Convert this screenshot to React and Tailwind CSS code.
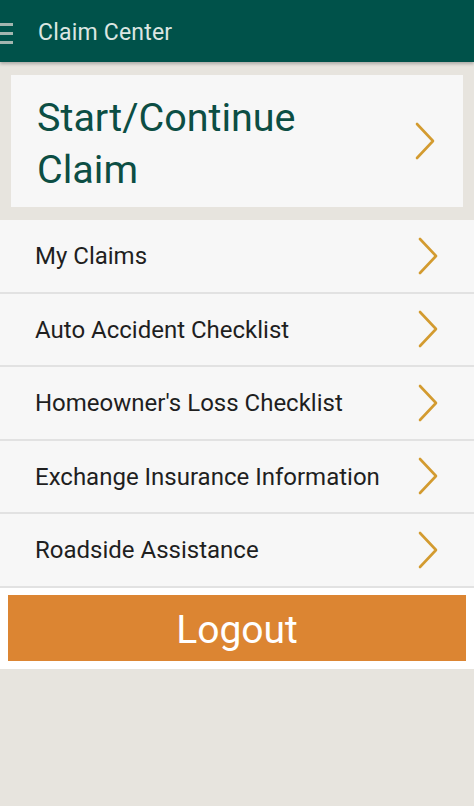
const items = [
  "My Claims",
  "Auto Accident Checklist",
  "Homeowner's Loss Checklist",
  "Exchange Insurance Information",
  "Roadside Assistance",
];

const Chevron = ({ className }) => (
  <svg viewBox="0 0 20 38" className={className} fill="none">
    <path d="M2 2 L18 19 L2 36" stroke="#d39b30" strokeWidth="2.6" strokeLinecap="round" strokeLinejoin="round" />
  </svg>
);

export default function App() {
  return (
    <div className="w-[474px] h-[806px] bg-[#e7e4de] flex flex-col font-['Roboto',sans-serif]">
      <header className="h-[62px] bg-[#00524a] flex items-center pt-[5px] shadow-[0_2px_3px_rgba(0,0,0,0.25)] relative z-10">
        <div className="w-[13px] flex flex-col gap-[6px] mr-[25px]">
          <span className="h-[3px] bg-[#a3b5af]" />
          <span className="h-[3px] bg-[#a3b5af]" />
          <span className="h-[3px] bg-[#a3b5af]" />
        </div>
        <h1 className="text-[23px] text-[#dbe6e2] tracking-[0.2px]">Claim Center</h1>
      </header>

      <div className="px-[11px] pt-[13px] pb-[13px]">
        <button className="w-full h-[132px] bg-[#f7f7f7] flex items-center justify-between pl-[26px] pr-[28px] text-left">
          <span className="text-[39.5px] leading-[52px] text-[#0c4e44] pt-[5px]">
            Start/Continue
            <br />
            Claim
          </span>
          <Chevron className="w-[20px] h-[38px]" />
        </button>
      </div>

      <ul className="bg-[#f7f7f7]">
        {items.map((item) => (
          <li
            key={item}
            className="h-[73.5px] border-b-2 border-[#e2e2e2] flex items-center justify-between pl-[35px] pr-[36px]"
          >
            <span className="text-[24px] text-[#1f1f1f] pt-[1px]">{item}</span>
            <Chevron className="w-[20px] h-[38px]" />
          </li>
        ))}
      </ul>

      <div className="bg-white px-[8px] pt-[7px] pb-[8px]">
        <button className="w-full h-[66px] bg-[#dc8532] text-white text-[39px] flex items-center justify-center pt-[6px]">
          Logout
        </button>
      </div>
    </div>
  );
}
